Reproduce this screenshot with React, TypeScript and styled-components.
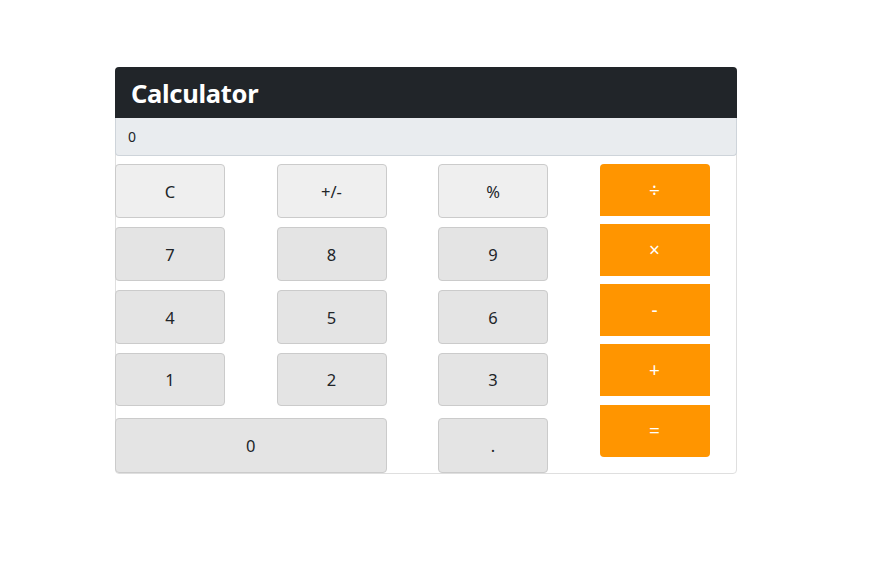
import React from "react";
import styled, { createGlobalStyle } from "styled-components";

const GlobalStyle = createGlobalStyle`
  body {
    margin: 0;
    background: #fff;
    font-family: "Noto Sans", "Open Sans", sans-serif;
  }
`;

const Page = styled.div`
  padding: 67px 0 0 115px;
`;

const Card = styled.div`
  width: 622px;
  border: 1px solid #dfdfdf;
  border-radius: 4px;
  box-sizing: border-box;
`;

const Header = styled.div`
  background: #212529;
  color: #fff;
  height: 51px;
  margin: -1px -1px 0;
  border-radius: 4px 4px 0 0;
  padding: 0 16px;
  display: flex;
  align-items: center;
  font-size: 25.5px;
  font-weight: 700;
  letter-spacing: -0.3px;
`;

const Display = styled.div`
  height: 38px;
  margin: 0 -1px;
  background: #e9ecef;
  border: 1px solid #ced4da;
  border-top: none;
  border-radius: 0 0 4px 4px;
  box-sizing: border-box;
  display: flex;
  align-items: center;
  padding-left: 12px;
  font-size: 14px;
  color: #212529;
`;

const Body = styled.div`
  display: flex;
  gap: 51.5px;
  padding-top: 8px;
  margin-left: -1px;
`;

const Keys = styled.div`
  display: grid;
  grid-template-columns: repeat(3, 110px);
  grid-template-rows: repeat(3, 54px) 53px 58px;
  column-gap: 51.5px;
  row-gap: 9px;
  & > :last-child,
  & > :nth-last-child(2) {
    margin-top: 3px;
  }
`;

const Key = styled.button<{ $light?: boolean; $wide?: boolean }>`
  grid-column: ${(p) => (p.$wide ? "span 2" : "auto")};
  background: ${(p) => (p.$light ? "#efefef" : "#e4e4e4")};
  border: 1px solid #cbcbcb;
  border-radius: 4px;
  color: #212529;
  font-family: "Noto Sans", "Open Sans", sans-serif;
  font-size: 16.5px;
  padding: 0;
  margin: 0;
`;

const Ops = styled.div`
  display: flex;
  flex-direction: column;
  gap: 8px;
`;

const Op = styled.button`
  width: 110px;
  height: 52px;
  background: #ff9500;
  border: none;
  border-radius: 0;
  color: #fff;
  font-family: "Noto Sans", "Open Sans", sans-serif;
  font-size: 19px;
  padding: 0;
  &:first-child {
    border-radius: 4px 4px 0 0;
  }
  &:last-child {
    border-radius: 0 0 4px 4px;
    margin-top: 1px;
  }
`;

export default function App() {
  return (
    <Page>
      <GlobalStyle />
      <Card>
        <Header>Calculator</Header>
        <Display>0</Display>
        <Body>
          <Keys>
            <Key $light>C</Key>
            <Key $light>+/-</Key>
            <Key $light>%</Key>
            <Key>7</Key>
            <Key>8</Key>
            <Key>9</Key>
            <Key>4</Key>
            <Key>5</Key>
            <Key>6</Key>
            <Key>1</Key>
            <Key>2</Key>
            <Key>3</Key>
            <Key $wide>0</Key>
            <Key>.</Key>
          </Keys>
          <Ops>
            <Op>÷</Op>
            <Op>×</Op>
            <Op>-</Op>
            <Op>+</Op>
            <Op>=</Op>
          </Ops>
        </Body>
      </Card>
    </Page>
  );
}
